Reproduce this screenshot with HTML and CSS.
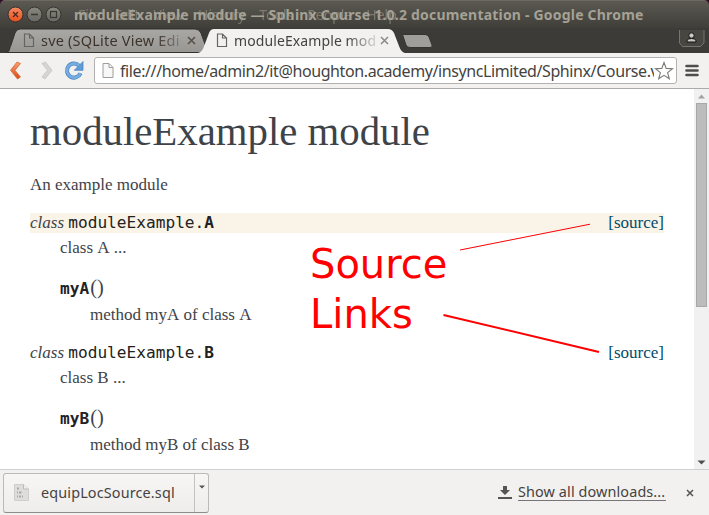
FILE: index.html
```html
<!DOCTYPE html>
<html lang="en">
<head>
<meta charset="utf-8">
<title>moduleExample module</title>
<link rel="stylesheet" href="styles.css">
</head>
<body>
<div class="window">
  <header class="titlebar">
    <svg class="controls" width="66" height="28" viewBox="0 0 66 28">
      <defs>
        <linearGradient id="orange" x1="0" y1="0" x2="0" y2="1"><stop offset="0" stop-color="#f58a64"/><stop offset="1" stop-color="#e4511f"/></linearGradient>
        <linearGradient id="grey" x1="0" y1="0" x2="0" y2="1"><stop offset="0" stop-color="#8a8880"/><stop offset="1" stop-color="#686760"/></linearGradient>
      </defs>
      <circle cx="15.5" cy="14.5" r="7.5" fill="url(#orange)" stroke="#33312c"/>
      <path d="M13 12l5 5M18 12l-5 5" stroke="#51271a" stroke-width="1.3"/>
      <circle cx="34.5" cy="14.5" r="7.5" fill="url(#grey)" stroke="#33312c"/>
      <path d="M31 14.5h7" stroke="#393731" stroke-width="1.3"/>
      <circle cx="53.5" cy="14.5" r="7.5" fill="url(#grey)" stroke="#33312c"/>
      <rect x="50.5" y="11.5" width="6" height="6" fill="none" stroke="#393731" stroke-width="1.2"/>
    </svg>
    <span class="title">moduleExample module — Sphinx Course 1.0.2 documentation - Google Chrome</span>
    <span class="menu"><span>File</span><span>Edit</span><span>View</span><span>History</span><span>Tools</span><span>People</span><span>Help</span></span>
  </header>
  <nav class="tabstrip">
    <svg class="tabshapes" width="709" height="25" viewBox="0 0 709 25">
      <defs><linearGradient id="tab" x1="0" y1="0" x2="0" y2="1"><stop offset="0" stop-color="#aaa8a5"/><stop offset="1" stop-color="#989693"/></linearGradient></defs>
      <path d="M6 24.5C10 24 9 21 11 17L15 5Q16.5 1 20 1H195Q199 1 201 5L208 24.5Z" fill="url(#tab)" stroke="#33322e"/>
      <path d="M198 25C202 24 203 21 204.5 17L209 5Q210.5 1 214 1H388Q392 1 394 5L399 18Q401 24 405 25Z" fill="#f2f1f0"/>
      <path d="M402.5 6.5H425Q428 6.5 429 9L432 17Q433 19.5 430 19.5H410Q407 19.5 406 17Z" fill="#a09e9b" stroke="#353430"/>
    </svg>
    <div class="tab">
      <svg width="12" height="15" viewBox="0 0 12 15"><path d="M1.5 1H6.5L10.5 5V13.5H1.5ZM6.5 1V5H10.5" fill="none" stroke="#656460" stroke-width="1.2"/></svg>
      <span class="label label-sve">sve (SQLite View Edi</span>
      <svg width="10" height="10" viewBox="0 0 10 10"><path d="M1 1l7 7M8 1l-7 7" stroke="#5c5248" stroke-width="1.7"/></svg>
    </div>
    <div class="tab active">
      <svg width="12" height="15" viewBox="0 0 12 15"><path d="M1.5 1H6.5L10.5 5V13.5H1.5ZM6.5 1V5H10.5" fill="none" stroke="#656460" stroke-width="1.2"/></svg>
      <span class="label">moduleExample mod</span>
      <svg width="10" height="10" viewBox="0 0 10 10"><path d="M1 1l7 7M8 1l-7 7" stroke="#8b8986" stroke-width="1.5"/></svg>
    </div>
    <svg class="profile" width="26" height="20" viewBox="0 0 26 20"><path d="M.5 2V15L3.5 18.5H21.5L25 15V2" fill="#474640" stroke="#77756d"/><circle cx="12.5" cy="7.5" r="2.7" fill="#c9c8c4" stroke="#11110f"/><path d="M8 14V12.5Q9 10.5 12.5 10.5T17 12.5V14Z" fill="#c9c8c4" stroke="#11110f"/></svg>
  </nav>
  <div class="toolbar">
    <svg class="navicons" width="94" height="35" viewBox="0 0 94 35">
      <defs><linearGradient id="back" x1="0" y1="0" x2="0" y2="1"><stop offset="0" stop-color="#f7a072"/><stop offset="1" stop-color="#d94a16"/></linearGradient></defs>
      <path d="M17 9L20.5 10.5L15 17.3L20.5 24L17.5 26L10.5 17.3Z" fill="url(#back)" stroke="#d56a3d" stroke-width=".8"/>
      <path d="M45.5 9L42 10.5L47.5 17.3L42 24L45 26L52 17.3Z" fill="#d7d5d3" stroke="#c5c3c1" stroke-width=".8"/>
      <path d="M79 12.7A7 7 0 1 0 80.5 20.2" fill="none" stroke="#4b88c5" stroke-width="4"/>
      <path d="M83 8.5V17.3H74.3Z" fill="#639bd4" stroke="#4b88c5" stroke-width=".8"/>
      <path d="M79 12.7A7 7 0 1 0 80.5 20.2" fill="none" stroke="#78ade0" stroke-width="2.5"/>
    </svg>
    <div class="address">
      <svg width="12" height="15" viewBox="0 0 12 15"><path d="M1 .5H7L11 4.5V14.5H1ZM7 .5V4.5H11" fill="#f7f7f7" stroke="#a09e9b"/></svg>
      <span class="url">file:///home/admin2/it@houghton.academy/insyncLimited/Sphinx/Course.v</span>
      <svg class="star" width="20" height="20" viewBox="0 0 20 20"><path d="M10 1.5L12.2 7.4L18.5 7.7L13.6 11.6L15.3 17.8L10 14.3L4.7 17.8L6.4 11.6L1.5 7.7L7.8 7.4Z" fill="#fff" stroke="#7c7a78" stroke-width="1.1"/></svg>
    </div>
    <svg class="burger" width="14" height="14" viewBox="0 0 14 14"><path d="M1.5 2H12.5M1.5 6.5H12.5M1.5 11H12.5" stroke="#4e4d4a" stroke-width="2.6" stroke-linecap="round"/></svg>
  </div>
  <div class="viewport">
    <main class="page">
      <h1>moduleExample module</h1>
      <p class="intro">An example module</p>
      <div class="sig target"><span><em>class</em> <code>moduleExample.<b>A</b></code></span><a>[source]</a></div>
      <p class="desc">class A ...</p>
      <div class="method"><code><b>myA</b></code><span class="paren">()</span></div>
      <p class="desc deep">method myA of class A</p>
      <div class="sig"><span><em>class</em> <code>moduleExample.<b>B</b></code></span><a>[source]</a></div>
      <p class="desc">class B ...</p>
      <div class="method"><code><b>myB</b></code><span class="paren">()</span></div>
      <p class="desc deep">method myB of class B</p>
    </main>
    <div class="scrollbar">
      <svg width="15" height="13" viewBox="0 0 15 13"><path d="M4 9.5L7.5 5.5L11 9.5Z" fill="#a3a3a3"/></svg>
      <div class="thumb"></div>
      <svg width="15" height="14" viewBox="0 0 15 14"><path d="M3.5 5.5L7.5 9.5L11.5 5.5Z" fill="#505050"/></svg>
    </div>
    <div class="note">Source<br>Links</div>
    <svg class="lines" width="694" height="380" viewBox="0 0 694 380"><path d="M460 161L590 135.2" stroke="#f00" stroke-width="1"/><path d="M443.5 226L599 263" stroke="#f00" stroke-width="1.9"/></svg>
  </div>
  <footer class="downloads">
    <div class="item">
      <div class="file">
        <svg width="15" height="17" viewBox="0 0 15 17"><path d="M.5 .5H9.5L14.5 5V16.5H.5Z" fill="#dedddb" stroke="#cfcecc"/><path d="M9.5 .5V5H14.5" fill="#f1f0ef" stroke="#bbb"/><path d="M3 4.5h2M3 8.5h1M5 8.5h2.5M3 12.5h1M5 12.5h2M8 12.5h1" stroke="#aaa8a5" stroke-width="2"/></svg>
        <span class="filename">equipLocSource.sql</span>
      </div>
      <div class="drop"><svg width="6" height="4" viewBox="0 0 6 4"><path d="M0 .5H6L3 3.5Z" fill="#55534f"/></svg></div>
    </div>
    <svg class="dlicon" width="14" height="14" viewBox="0 0 14 14"><path d="M5 0H9V4H12L7 9L2 4H5Z" fill="#555"/><path d="M0 12H14" stroke="#555" stroke-width="2"/></svg>
    <span class="showall">Show all downloads...</span>
    <svg class="close" width="8" height="8" viewBox="0 0 8 8"><path d="M1 1l6 6M7 1l-6 6" stroke="#55534f" stroke-width="1.5"/></svg>
  </footer>
</div>
</body>
</html>
```
FILE: styles.css
```css
* { box-sizing: border-box; }
body { margin: 0; background: #300a24; font-family: "Noto Sans", sans-serif; }
svg { display: block; flex: none; }
h1, p { margin: 0; font-weight: normal; }
.window { width: 709px; height: 515px; display: flex; flex-direction: column; overflow: hidden; border-radius: 5px 5px 0 0; }

.titlebar { position: relative; height: 28px; flex: none; display: flex; background: linear-gradient(#5b5952, #3f3e39); border-top: 1px solid #6b6960; white-space: nowrap; }
.controls { margin-top: -1px; }
.title { margin-left: 8px; line-height: 28px; font-size: 14px; font-weight: bold; color: #a5a195; letter-spacing: .2px; }
.menu { position: absolute; left: 78px; top: 0; display: flex; gap: 14px; line-height: 28px; font-size: 14px; color: #aaa69b; opacity: .5; }

.tabstrip { position: relative; height: 25px; flex: none; display: flex; background: #3c3b37; }
.tabshapes { position: absolute; left: 0; top: 0; }
.tab { position: relative; display: flex; align-items: center; margin-left: 23px; width: 174px; color: #3c342c; }
.tab.active { margin-left: 19px; color: #45433f; }
.label { width: 142px; margin-left: 6px; margin-right: 5px; font-size: 14px; letter-spacing: .1px; line-height: 25px; overflow: hidden; white-space: nowrap; -webkit-mask-image: linear-gradient(90deg, #000 80%, rgba(0,0,0,.2)); mask-image: linear-gradient(90deg, #000 80%, rgba(0,0,0,.2)); }
.label-sve { margin-right: 4px; font-size: 14.5px; letter-spacing: .2px; }
.profile { position: absolute; left: 679px; top: 0; }

.toolbar { height: 36px; flex: none; display: flex; background: #f2f1f0; border-bottom: 1px solid #acabaa; }
.address { width: 583px; height: 27px; margin-top: 4px; display: flex; align-items: center; padding-left: 7px; background: #fff; border: 1px solid #b4b2b0; border-radius: 3px; }
.url { width: 534px; margin-left: 6px; overflow: hidden; white-space: nowrap; font-size: 16px; letter-spacing: -.4px; line-height: 24px; color: #45433f; }
.burger { margin: 11px 0 0 8px; }

.viewport { position: relative; height: 380px; flex: none; display: flex; background: #fff; }
.page { width: 694px; padding: 18px 30px 0; font-family: "Liberation Serif", serif; font-size: 17px; line-height: 24px; color: #3e4349; font-kerning: none; }
h1 { font-size: 40.8px; line-height: 50px; }
.intro { margin-top: 16px; }
.sig { display: flex; justify-content: space-between; height: 20px; line-height: 20px; margin-top: 16px; }
.target { background: #faf3e8; }
.sig a { color: #004b6b; }
code { font-family: "DejaVu Sans Mono", monospace; font-size: 16.15px; color: #222; }
.desc { margin-left: 30px; margin-top: 3px; }
.deep { margin-left: 60px; }
.method { margin: 16px 0 0 30px; height: 24px; line-height: 23px; }
.paren { margin-left: 1px; font-size: 20.4px; }
.scrollbar { width: 15px; display: flex; flex-direction: column; background: #f1f1f1; }
.thumb { width: 11px; height: 204px; margin: 1px 0 auto 2px; background: #bcbcbc; border: 1px solid #a8a8a8; }
.note { position: absolute; left: 310px; top: 150px; font-family: "DejaVu Sans", sans-serif; font-size: 40px; line-height: 50px; color: #f00; }
.lines { position: absolute; left: 0; top: 0; }

.downloads { position: relative; height: 46px; flex: none; display: flex; align-items: center; background: #f2f1f0; border-top: 1px solid #d0d0d0; color: #45433f; font-size: 14.4px; white-space: nowrap; }
.item { width: 206px; height: 40px; margin-left: 3px; display: flex; background: linear-gradient(#f7f6f5, #eeedec); border: 1px solid #bcbab7; border-bottom-color: #8f8d8a; border-radius: 3px; }
.file { width: 191px; display: flex; align-items: center; padding-left: 10px; border-right: 1px solid #c4c2bf; }
.filename { margin-left: 12px; letter-spacing: .15px; }
.drop { padding: 11px 0 0 4px; }
.dlicon { margin-left: 289px; }
.showall { margin-left: 6px; width: 148px; line-height: 16px; letter-spacing: .12px; border-bottom: 1px solid #77757a; }
.close { margin-left: 20px; }
```
